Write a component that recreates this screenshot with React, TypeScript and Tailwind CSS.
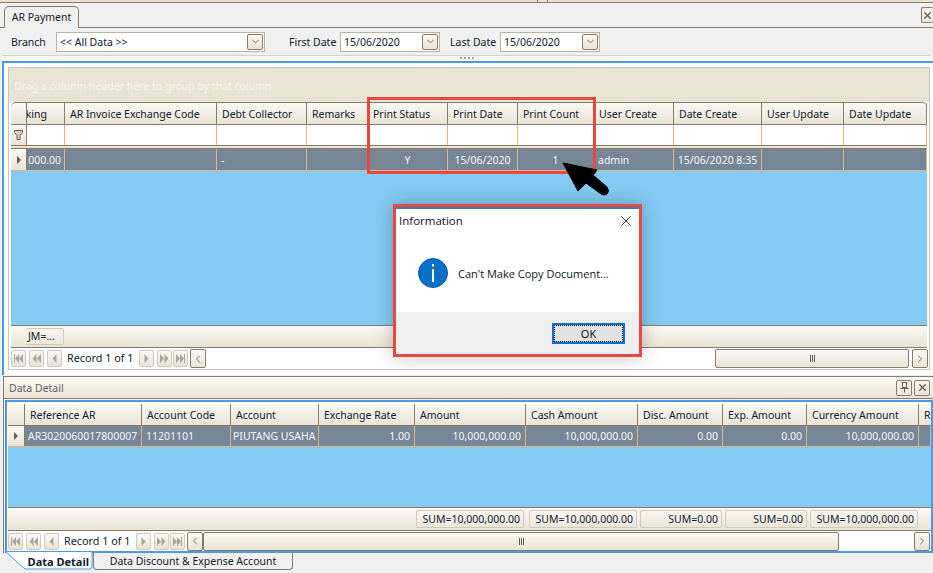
import { ChevronDown, ChevronLeft, ChevronRight, X } from 'lucide-react'

const FONT = "font-['Noto_Sans',sans-serif]"
const TOP_COLS = 'grid-cols-[16px_38px_152px_90px_61px_80px_70px_76px_80px_88px_82px_83px]'
const DETAIL_COLS = 'grid-cols-[17px_117px_89px_88px_96px_111px_112px_85px_84px_112px_12px]'
const BTN = 'bg-gradient-to-b from-[#fbf9f5] to-[#e9e3d4]'

const TOP_HEADERS = ['', 'oking', 'AR Invoice Exchange Code', 'Debt Collector', 'Remarks', 'Print Status', 'Print Date', 'Print Count', 'User Create', 'Date Create', 'User Update', 'Date Update']

const TOP_ROW = [
  { t: '000.00', a: 'text-right' },
  { t: '' },
  { t: '-', a: 'pl-1' },
  { t: '' },
  { t: 'Y', a: 'text-center' },
  { t: '15/06/2020', a: 'text-center' },
  { t: '1', a: 'text-center' },
  { t: 'admin', a: 'pl-1' },
  { t: '15/06/2020 8:35', a: 'text-center' },
  { t: '' },
  { t: '' },
]

const DETAIL_HEADERS = ['', 'Reference AR', 'Account Code', 'Account', 'Exchange Rate', 'Amount', 'Cash Amount', 'Disc. Amount', 'Exp. Amount', 'Currency Amount', 'R']

const DETAIL_ROW = [
  { t: 'AR3020060017800007', a: 'pl-[3px]' },
  { t: '11201101', a: 'pl-1' },
  { t: 'PIUTANG USAHA', a: 'pl-0.5' },
  { t: '1.00', a: 'text-right pr-1' },
  { t: '10,000,000.00', a: 'text-right pr-1' },
  { t: '10,000,000.00', a: 'text-right pr-1' },
  { t: '0.00', a: 'text-right pr-1' },
  { t: '0.00', a: 'text-right pr-1' },
  { t: '10,000,000.00', a: 'text-right pr-1' },
  { t: '' },
]

function Combo({ value, width }: { value: string; width: string }) {
  return (
    <div className={`${width} h-5 flex items-center justify-between border border-[#b9b2a5] bg-white pl-[3px] pr-[1px]`}>
      <span className="pt-px">{value}</span>
      <span className={`w-4 h-4 flex items-center justify-center border border-[#8c7a69] rounded-[2px] ${BTN}`}>
        <ChevronDown size={11} className="text-[#6b5b4d]" />
      </span>
    </div>
  )
}

function NavIcon({ kind }: { kind: string }) {
  return (
    <span className={`w-[15px] h-[17px] flex items-center justify-center border border-[#cfcabf] rounded-[2px] ${BTN}`}>
      <svg width="11" height="9" viewBox="0 0 11 9" fill="#a9a59c">
        {kind === 'first' && <path d="M1 0h1v9H1zM6 0v9L2 4.500zM10 0v9L6 4.500z" />}
        {kind === 'prev2' && <path d="M5.500 0v9L1.500 4.500zM10 0v9L6 4.500z" />}
        {kind === 'prev' && <path d="M7.500 0v9L3.500 4.500z" />}
        {kind === 'next' && <path d="M3.500 0v9L7.500 4.500z" />}
        {kind === 'next2' && <path d="M1 0v9L5 4.500zM5.500 0v9L9.500 4.500z" />}
        {kind === 'last' && <path d="M1 0v9L5 4.500zM5 0v9L9 4.500zM9 0h1v9H9z" />}
      </svg>
    </span>
  )
}

function Navigator() {
  return (
    <div className="flex items-center gap-[3px]">
      <NavIcon kind="first" />
      <NavIcon kind="prev2" />
      <NavIcon kind="prev" />
      <span className="w-[71px] pl-[2px] text-[10.8px] text-[#10202c] whitespace-nowrap">Record 1 of 1</span>
      <NavIcon kind="next" />
      <NavIcon kind="next2" />
      <span className="-ml-[2px]"><NavIcon kind="last" /></span>
    </div>
  )
}

function ScrollBtn({ right = false }: { right?: boolean }) {
  return (
    <span className={`w-4 h-[19px] shrink-0 flex items-center justify-center border border-[#8c7a69] rounded-[2px] ${BTN}`}>
      {right ? <ChevronRight size={12} className="text-[#7a6a5c]" /> : <ChevronLeft size={12} className="text-[#7a6a5c]" />}
    </span>
  )
}

function Thumb({ className }: { className: string }) {
  return (
    <div className={`${className} h-[19px] flex items-center justify-center border border-[#8c7a69] rounded-[2px] ${BTN}`}>
      <span className="w-[5px] h-[7px] border-x border-[#6b5b4d] relative">
        <span className="absolute left-[1px] top-0 w-px h-full bg-[#6b5b4d]" />
      </span>
    </div>
  )
}

function RowMark() {
  return (
    <div className={`flex items-center justify-center border-r border-[#8c7a69] ${BTN}`}>
      <span className="w-0 h-0 border-y-[4px] border-y-transparent border-l-[4px] border-l-[#6b5b4d]" />
    </div>
  )
}

function TopGrid() {
  return (
    <div className="flex-1 ml-[4px] mr-[3px] flex flex-col border border-[#c9c5bb] bg-white min-h-0">
      <div className="h-[34px] bg-[#e9e3d4] text-[#f7f4ec] pl-[5px] pt-[13px] shrink-0">Drag a column header here to group by that column</div>
      <div className={`grid ${TOP_COLS} mx-[2px] h-[23px] shrink-0 border-y border-[#8c7a69] rounded-tl-[5px] rounded-tr-[5px] ${BTN} text-[#10202c]`}>
        {TOP_HEADERS.map((h, i) => (
          <div key={i} className={`flex items-center pt-px border-r border-[#8c7a69] overflow-hidden whitespace-nowrap ${i === 1 ? 'justify-end pr-[17px]' : 'pl-[5px]'}`}>{h}</div>
        ))}
      </div>
      <div className={`grid ${TOP_COLS} mx-[2px] h-[20px] shrink-0 bg-white`}>
        {TOP_HEADERS.map((h, i) =>
          i === 0 ? (
            <div key={i} className={`flex items-center justify-center border-r border-[#8c7a69] ${BTN}`}>
              <svg width="9" height="10" viewBox="0 0 9 10" fill="#d8d2c5" stroke="#6b5b4d" strokeWidth="1"><path d="M.5.500h8v2L6 5.500v4H3v-4L.5 2.500z" /></svg>
            </div>
          ) : (
            <div key={i} className="border-r border-[#d9b98c]" />
          ),
        )}
      </div>
      <div className="h-[4px] mx-[2px] shrink-0 border-y border-[#8c7a69] bg-[#e9e3d4]" />
      <div className={`grid ${TOP_COLS} mx-[2px] h-[22px] shrink-0 bg-[#768696] text-[#f4f6f8] border-b border-[#d9b98c]`}>
        <RowMark />
        {TOP_ROW.map((c, i) => (
          <div key={i} className={`flex items-center pt-px border-r border-[#d9b98c] whitespace-nowrap overflow-hidden ${c.a === 'text-right' ? 'justify-end pr-[3px]' : c.a === 'text-center' ? 'justify-center' : 'pl-1'}`}>{c.t}</div>
        ))}
      </div>
      <div className="flex-1 mx-[2px] bg-[#83cbf2]" />
      <div className={`h-[23px] mx-[2px] shrink-0 border-y border-[#8c7a69] pl-4 pt-[2px] ${BTN}`}>
        <span className="inline-flex items-center h-[17px] w-[37px] pl-[1px] border border-[#cfcabf] border-l-0 rounded-r-[2px] text-[#10202c]">JM=...</span>
      </div>
      <div className="h-[21px] ml-[2px] mr-[1px] shrink-0 flex items-center bg-white">
        <Navigator />
        <span className="ml-[2px]"><ScrollBtn /></span>
        <div className="flex-1" />
        <Thumb className="w-[194px]" />
        <span className="ml-[3px]"><ScrollBtn right /></span>
      </div>
    </div>
  )
}

function DetailGrid() {
  return (
    <div className="flex-1 flex flex-col ml-[1px] border-2 border-[#4a9ae8] min-h-0 bg-white">
      <div className={`grid ${DETAIL_COLS} h-[22px] shrink-0 border-b border-[#8c7a69] mt-[2px] ml-[1px] ${BTN} text-[#10202c]`}>
        {DETAIL_HEADERS.map((h, i) => (
          <div key={i} className={`flex items-center pt-px border-r border-[#8c7a69] whitespace-nowrap overflow-hidden pl-[5px] ${i === 10 ? 'border-r-0' : ''}`}>{h}</div>
        ))}
      </div>
      <div className={`grid ${DETAIL_COLS} h-[21px] shrink-0 ml-[1px] bg-[#768696] text-[#f4f6f8] border-b border-[#d9b98c]`}>
        <RowMark />
        {DETAIL_ROW.map((c, i) => (
          <div key={i} className={`flex items-center border-r border-[#d9b98c] whitespace-nowrap overflow-hidden ${c.a ?? ''} ${c.a?.includes('text-right') ? 'justify-end' : ''}`}>{c.t}</div>
        ))}
      </div>
      <div className="flex-1 ml-[1px] bg-[#83cbf2]" />
      <div className={`h-[24px] shrink-0 ml-[1px] border-y border-[#8c7a69] flex items-center justify-end gap-[3px] pr-[13px] ${BTN} text-[#10202c]`}>
        {[
          ['w-[108px] mr-[2px]', 'SUM=10,000,000.00'],
          ['w-[108px]', 'SUM=10,000,000.00'],
          ['w-[82px]', 'SUM=0.00'],
          ['w-[82px]', 'SUM=0.00'],
          ['w-[108px]', 'SUM=10,000,000.00'],
        ].map(([w, t], i) => (
          <span key={i} className={`${w} h-[18px] flex items-center justify-end pr-[3px] border border-[#cfcabf] rounded-[2px] whitespace-nowrap`}>{t}</span>
        ))}
      </div>
      <div className="h-[20px] shrink-0 flex items-center pl-[1px] pr-px bg-white">
        <Navigator />
        <span className="ml-[2px]"><ScrollBtn /></span>
        <Thumb className="w-[636px]" />
        <div className="flex-1" />
        <ScrollBtn right />
      </div>
    </div>
  )
}

function InfoDialog() {
  return (
    <div className="absolute left-[393px] top-[204px] w-[249px] h-[153px] border-[3px] border-[#e8483f] flex flex-col bg-white shadow-[0_0_18px_rgba(0,0,0,0.25)] font-['Open_Sans',sans-serif]">
      <div className="h-[2px] bg-[#3b7ea8] shrink-0" />
      <div className="h-[103px] shrink-0">
        <div className="flex items-center justify-between h-[24px] pl-[3px] pr-[4px] text-[11.5px] text-[#1a0a2e]">
          <span>Information</span>
          <X size={18} strokeWidth={1} className="text-black" />
        </div>
        <div className="flex items-center pl-[22px] pt-[25px] gap-[10px]">
          <svg width="30" height="30" viewBox="0 0 30 30">
            <circle cx="15" cy="15" r="14.500" fill="#0a70c8" stroke="#0b5ca5" strokeWidth="1" />
            <rect x="14" y="6" width="2" height="2.500" fill="#fff" />
            <rect x="14" y="11" width="2" height="13" fill="#fff" />
          </svg>
          <span className="text-[11px] text-[#101820]">Can't Make Copy Document...</span>
        </div>
      </div>
      <div className="flex-1 bg-[#efefef] flex justify-end items-start pt-[11px] pr-[14px]">
        <button className="w-[73px] h-[21px] border-2 border-[#0a70d0] bg-[#e1e1e1] flex items-center justify-center text-[11px] text-black outline-1 outline-dotted outline-black -outline-offset-3">OK</button>
      </div>
    </div>
  )
}

export default function App() {
  return (
    <div className={`relative w-[933px] h-[573px] overflow-hidden bg-[#f0f0f0] text-[10.5px] leading-none ${FONT}`}>
      {/* atas */}
      <div className="h-[3px] border-b border-[#8c7a69] bg-[#e9e3d4] flex pl-[537px] gap-[2px]">
        <span className="w-[11px] h-[2px] border-x border-[#8c7a69]" />
      </div>
      <div className="h-[25px] flex items-end justify-between border-b border-[#8c7a69] pl-1">
        <div className="w-[75px] h-[22px] -mb-px flex items-center justify-center border border-b-0 border-[#8c7a69] rounded-t-[5px] bg-[#f0f0f0] text-[#10202c]">AR Payment</div>
        <span className={`w-[12px] h-[16px] mb-[4px] flex items-center justify-center border border-[#8c7a69] rounded-[2px] border-r-0 ${BTN}`}>
          <X size={11} strokeWidth={3} className="text-[#6b5b4d]" />
        </span>
      </div>
      <div className="h-[27px] flex items-center text-[#10202c]">
        <span className="w-[56px] pl-[11px] pt-px">Branch</span>
        <Combo value="<< All Data >>" width="w-[209px]" />
        <span className="ml-[24px] w-[51px] pt-px whitespace-nowrap">First Date</span>
        <Combo value="15/06/2020" width="w-[100px]" />
        <span className="ml-[10px] w-[50px] pt-px whitespace-nowrap">Last Date</span>
        <Combo value="15/06/2020" width="w-[100px]" />
      </div>
      <div className="h-[6px] mx-[2px] border-t border-[#d8d2c5] bg-[#f7f5ef] flex justify-center">
        <span className="w-[14px] mt-[1px] border-t-2 border-dotted border-[#a8a296]" />
      </div>

      {/* grid utama */}
      <div className="h-[314px] ml-[2px] border-t-2 border-l-2 border-[#4a9ae8] bg-white pt-[4px] pb-[5px] flex flex-col">
        <TopGrid />
      </div>

      {/* data detail */}
      <div className="h-[177px] ml-[3px] mt-[1px] flex flex-col border-l border-[#8c7a69]">
        <div className={`h-[23px] shrink-0 flex items-center justify-between border-y border-[#8c7a69] pl-[5px] pr-[3px] text-[#6e5a66] ${BTN}`}>
          <span className="pt-px">Data Detail</span>
          <span className="flex gap-[2px]">
            <span className="w-4 h-4 flex items-center justify-center border border-[#8c7a69] rounded-[2px]">
              <svg width="9" height="11" viewBox="0 0 9 11" fill="none" stroke="#6b5b4d" strokeWidth="1">
                <path d="M1.500.500h6M2.500.500v5h4v-5M.500 6.500h8M4.500 6.500v4" />
              </svg>
            </span>
            <span className="w-4 h-4 flex items-center justify-center border border-[#8c7a69] rounded-[2px]"><X size={11} strokeWidth={3} className="text-[#6b5b4d]" /></span>
          </span>
        </div>
        <div className="h-[1px] shrink-0" />
        <DetailGrid />
      </div>

      {/* tab bawah */}
      <div className="flex h-[19px] ml-[6px] -mt-px text-[#10202c]">
        <div className="relative w-[87px] h-[18px] flex items-center justify-end pr-[4px] pt-px font-bold text-[11px]">
          <svg className="absolute left-0 top-0" width="87" height="18" viewBox="0 0 87 18">
            <path d="M0 0 L19 17 H84 Q86 17 86 14 V0 Z" fill="#fff" />
            <path d="M0 0 L19 17 H84 Q86 17 86 14 V0" fill="none" stroke="#4a9ae8" />
          </svg>
          <span className="relative">Data Detail</span>
        </div>
        <div className="w-[200px] h-[18px] flex items-center justify-center pt-px border border-t-0 border-[#7a7a7a] rounded-b-[4px]">Data Discount &amp; Expense Account</div>
      </div>

      {/* anotasi */}
      <div className="absolute left-[367px] top-[97px] w-[229px] h-[77px] border-[3px] border-[#e8483f] pointer-events-none" />
      <svg className="absolute left-[560px] top-[158px]" width="54" height="40" viewBox="0 0 54 40">
        <path d="M3 5 L37 12 L33 17 L47 29 Q50 33 47 36 Q44 38 41 36 L26 25 L18 33 Z" fill="#000" stroke="#000" strokeWidth="1" strokeLinejoin="round" />
      </svg>
      <InfoDialog />
    </div>
  )
}
